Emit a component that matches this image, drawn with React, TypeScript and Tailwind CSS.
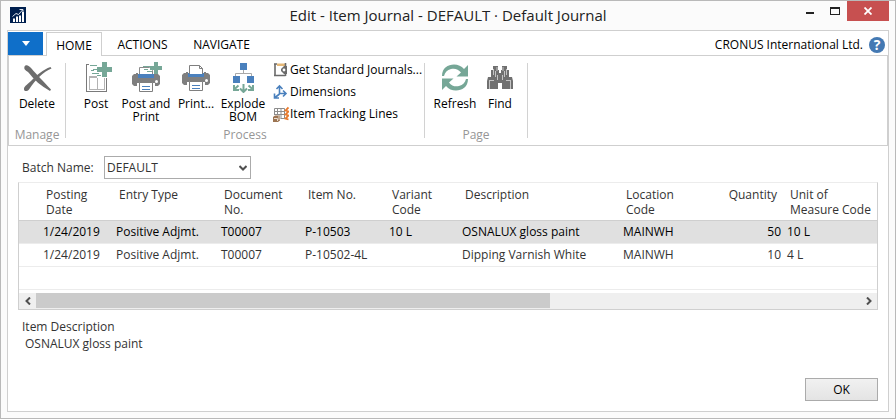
import type { ReactNode } from "react";

function LogoIcon() {
  return (
    <svg width="16" height="16" viewBox="0 0 16 16" aria-hidden="true">
      <rect width="16" height="16" fill="#00204f" />
      <path d="M3 11.500h2V15H3zM6 9.500h2V15H6zM9 8.500h2V15H9zM12 5h2v10h-2z" fill="#fff" />
      <path d="M2.500 9.500 6 6.500l2.500 1 4-4.500M9.500 2.500h3.500v3" fill="none" stroke="#dfe5ee" strokeWidth="1" />
    </svg>
  );
}

function DeleteIcon() {
  return (
    <svg width="32" height="32" viewBox="0 0 32 32" fill="#6d6d6d" aria-hidden="true">
      <path d="M3.500 5.500C5 3 8 4.500 10.500 7.500 16 14 22 20 30 28.500L29 30C20 25 13 19 7.500 11.500 5.500 9.500 2.500 9 3.500 5.500Z" />
      <path d="M30.500 7.500C22 11 15 18 8 28.500 6 31 2.500 30.500 3 27.500 3.500 25 7 23 10 20 16 14 22 8.500 29.500 6Z" />
    </svg>
  );
}

function PostIcon() {
  return (
    <svg width="32" height="32" viewBox="0 0 32 32" shapeRendering="crispEdges" aria-hidden="true">
      <path d="M6 3h3v1H7v26h19V17h1v14H6z" fill="#7a7a7a" />
      <path d="M9 15h8v2h-7v11h7V17h1v11h6V17h1v12H9z" fill="#b3b3b3" />
      <path d="M10 4h7v1h-7zM13 8h4v1h-4zM11 9h3v1h-3zM12 12h7v1h-7zM17 14h4v1h-4z" fill="#76a797" />
      <path d="M22 1h5v5h5v5h-5v5h-5v-5h-5V6h5z" fill="#76a797" />
    </svg>
  );
}

function PrinterBody() {
  return (
    <>
      <path d="M4 13h2v-1h2v4h16v-4h2v1h2l2 2v8l-2 2h-3v-3H7v3H4l-2-2v-8z" fill="#7f7f7f" />
      <path d="M8 13h16v4H8z" fill="#4a80bd" />
      <path d="M9.500 21.500h13v9h-13z" fill="#fff" stroke="#7f7f7f" />
      <path d="M12 25.500h8M12 28.500h8" stroke="#4a80bd" />
      <circle cx="26.500" cy="20.500" r="1.500" fill="#fff" />
    </>
  );
}

function PostPrintIcon() {
  return (
    <svg width="32" height="32" viewBox="0 0 32 32" aria-hidden="true">
      <PrinterBody />
      <path d="M9.500 14V6.500h10l3 3V14" fill="#fff" stroke="#8b8b8b" />
      <path d="M9 13h14v1H9z" fill="#4a80bd" />
      <path d="M13 5.500h7M14 8.500h4M17 10.500h5" stroke="#76a797" />
      <path d="M24 1h4v4h4v4h-4v4h-4V9h-4V5h4z" fill="#76a797" />
    </svg>
  );
}

function PrintIcon() {
  return (
    <svg width="32" height="32" viewBox="0 0 32 32" aria-hidden="true">
      <g transform="translate(0 -1)">
        <PrinterBody />
      </g>
      <path d="M9.500 14V4.500h10l3 3V14z" fill="#fff" stroke="#7f7f7f" />
      <path d="M19.500 4.500v3h3" fill="none" stroke="#7f7f7f" />
      <path d="M8 13h16v3H8z" fill="#4a80bd" />
    </svg>
  );
}

function ExplodeIcon() {
  return (
    <svg width="32" height="32" viewBox="0 0 32 32" aria-hidden="true">
      <path d="M16.500 9v3M8.500 15v-2.500h16V15" fill="none" stroke="#a9a9a9" />
      <path d="M13 2h7v7h-7zM6 15h7v7H6zM20 15h7v7h-7z" fill="#4a80bd" />
      <g fill="none" stroke="#76a797" strokeWidth="2">
        <path d="M16.500 23v8M13 27.500l3.500 3.500 3.500-3.500" />
        <path d="M11.500 24.500l-5 4.500M7 24v5h5M21.500 24.500l5 4.500M26 24v5h-5" />
      </g>
    </svg>
  );
}

function RefreshIcon() {
  return (
    <svg width="32" height="32" viewBox="0 0 32 32" aria-hidden="true">
      <g fill="#76a797">
        <path d="M3 15C3 7 9 3.500 15 3.500c4 0 7.500 1.500 10 4.500l4-4v11.500H17.500l4.500-4C19.500 8 15.500 7 12 8c-4 1-6 3.500-7 7Z" />
        <path d="M29 18c0 8-6 11.500-12 11.500-4 0-7.500-1.500-10-4.500l-4 4V17.500h11.500l-4.500 4c2.500 3.500 6.500 4.500 10 3.500 4-1 6-3.500 7-7Z" />
      </g>
    </svg>
  );
}

function FindIcon() {
  return (
    <svg width="32" height="32" viewBox="0 0 32 32" aria-hidden="true">
      <path d="M9 5h5v4h1v3h2V9h1V5h5v4h2v7h3l1 4v8H18v-6h-4v6H3v-8l1-4h3V9h2z" fill="#707070" />
      <path d="M9.500 8v6M13 6v4M19 6v4M22.500 8v6M11.500 10v6M20.500 10v6M5 19.500h5M22 19.500h5M5.500 20v8M26.500 20v8M13.500 14v5M18.500 14v5" fill="none" stroke="#c4c4c4" strokeWidth="1" />
    </svg>
  );
}

function JournalIcon() {
  return (
    <svg className="shrink-0" width="16" height="16" viewBox="0 0 16 16" aria-hidden="true">
      <path d="M4 1.500h8V4H4z" fill="#e5b878" />
      <path d="M2 2v12M1 2h3M1 13.500h11.500M12.500 11v3M12.500 1v3" fill="none" stroke="#6a6a6a" strokeWidth="1.600" />
      <path d="M8 7l3-3h3v8h-3L8 9z" fill="#6a6a6a" />
      <circle cx="11" cy="8" r="1.400" fill="#fff" />
    </svg>
  );
}

function DimensionsIcon() {
  return (
    <svg className="shrink-0" width="16" height="16" viewBox="0 0 16 16" fill="none" stroke="#4a80bd" strokeWidth="1.600" aria-hidden="true">
      <path d="M6.500 10V2M3.500 5l3-3 3 3M6.500 9.500H13M10 6.500l3 3-3 3M6.500 10 2 13.500M1.500 9.500V14H6" />
    </svg>
  );
}

function TrackingIcon() {
  return (
    <svg className="shrink-0" width="16" height="16" viewBox="0 0 16 16" aria-hidden="true">
      <path d="M1.500 2.500h10v10h-4M1.500 8V2.500M1 5.500h10M1 8.500h10M4.500 2.500V9M8 2.500v10" fill="none" stroke="#8d8d8d" />
      <path d="M0 11l2-1.500h5v5L5 16H0z" fill="#9c7452" />
      <path d="M1 12.500h3.500V15M6 10v4" fill="none" stroke="#e8dccf" />
      <path d="M15.500 1.500l-3 3 3 1-3 3 3 1-3 3 3 1" fill="none" stroke="#e8792b" strokeWidth="1.800" />
    </svg>
  );
}

function RibbonButton({ icon, lines, width }: { icon: ReactNode; lines: string[]; width: string }) {
  return (
    <button type="button" className={`flex flex-col items-center text-black ${width}`}>
      {icon}
      <span className="mt-1 text-[12px] leading-[13px] whitespace-nowrap">
        {lines.map((line) => (
          <span key={line} className="block">
            {line}
          </span>
        ))}
      </span>
    </button>
  );
}

function SmallButton({ icon, label }: { icon: ReactNode; label: string }) {
  return (
    <button type="button" className="flex h-[22px] items-center gap-px whitespace-nowrap text-black">
      {icon}
      <span>{label}</span>
    </button>
  );
}

function RibbonGroup({ title, children }: { title: string; children: ReactNode }) {
  return (
    <section aria-label={title} className="my-[7px] flex h-[75px] flex-col border-r border-[#d2d2d2]">
      <div className="-mt-0.5 flex h-[67px] shrink-0 items-start">{children}</div>
      <h2 className="shrink-0 text-center leading-[14px] text-[#969696]">{title}</h2>
    </section>
  );
}

const columns = [
  { title: ["Posting", "Date"], width: "w-[73px]" },
  { title: ["Entry Type"], width: "w-[105px]" },
  { title: ["Document", "No."], width: "w-[84px]" },
  { title: ["Item No."], width: "w-[84px]" },
  { title: ["Variant", "Code"], width: "w-[73px]" },
  { title: ["Description"], width: "w-[161px]" },
  { title: ["Location", "Code"], width: "w-[74px]" },
  { title: ["Quantity"], width: "w-[90px]", numeric: true },
  { title: ["Unit of", "Measure Code"], width: "w-auto" },
];

const rows = [
  ["1/24/2019", "Positive Adjmt.", "T00007", "P-10503", "10 L", "OSNALUX gloss paint", "MAINWH", "50", "10 L"],
  ["1/24/2019", "Positive Adjmt.", "T00007", "P-10502-4L", "", "Dipping Varnish White", "MAINWH", "10", "4 L"],
];

function JournalTable() {
  return (
    <div className="mx-2.5 mt-[3px] border border-t-[#ececec] border-[#cfcfcf]">
      <table className="w-full table-fixed border-collapse text-left">
        <colgroup>
          <col className="w-[21px]" />
          {columns.map((c) => (
            <col key={c.title[0]} className={c.width} />
          ))}
        </colgroup>
        <thead>
          <tr className="h-[37px] border-b border-[#cfcfcf] align-top">
            <td />
            {columns.map((c) => (
              <th
                key={c.title[0]}
                scope="col"
                className={`pt-1 leading-[15px] font-normal whitespace-nowrap text-[#333] ${c.numeric ? "pr-[7px] text-right" : "pl-1.5"}`}
              >
                {c.title.map((line) => (
                  <span key={line} className="block">
                    {line}
                  </span>
                ))}
              </th>
            ))}
          </tr>
        </thead>
        <tbody>
          {rows.map((row, r) => (
            <tr key={row[3]} className={`h-[23px] border-b border-[#ececec] ${r === 0 ? "bg-[#e0e0e0] text-black" : "text-[#333]"}`}>
              <td />
              {row.map((value, i) => (
                <td key={columns[i].title[0]} className={`whitespace-nowrap ${columns[i].numeric ? "pr-[3px] text-right" : "pl-[3px]"}`}>
                  {value}
                </td>
              ))}
            </tr>
          ))}
          <tr className="h-[23px] border-b border-[#ececec]">
            <td colSpan={10} />
          </tr>
        </tbody>
      </table>
      <div className="mt-[3px] flex h-4 bg-[#efefef]">
        <button type="button" aria-label="Scroll left" className="flex w-[17px] items-center justify-center">
          <svg width="8" height="8" viewBox="0 0 8 8" aria-hidden="true">
            <path d="M6 .5 2.500 4 6 7.500" fill="none" stroke="#505050" strokeWidth="2" />
          </svg>
        </button>
        <div className="flex-1">
          <div className="h-[15px] w-[62.4%] bg-[#cbcbcb]" />
        </div>
        <button type="button" aria-label="Scroll right" className="flex w-[17px] items-center justify-center">
          <svg width="8" height="8" viewBox="0 0 8 8" aria-hidden="true">
            <path d="M2 .5 5.500 4 2 7.500" fill="none" stroke="#505050" strokeWidth="2" />
          </svg>
        </button>
      </div>
    </div>
  );
}

export default function App() {
  return (
    <div className="flex min-h-screen flex-col border border-[#b9b9b9] bg-[#fbfbfb] px-1.5 pb-1.5 font-['Open_Sans','Noto_Sans',sans-serif] text-[12px] text-[#333]">
      <header className="flex h-[29px] shrink-0 items-start">
        <div className="w-[92px] pt-1.5 pl-[3px]">
          <LogoIcon />
        </div>
        <h1 className="flex-1 pt-[3px] text-center text-[15px] leading-[22px] whitespace-nowrap text-[#222]">
          Edit - Item Journal - DEFAULT · Default Journal
        </h1>
        <div className="flex h-5 w-[92px] justify-end">
          <button type="button" aria-label="Minimize" className="flex w-[27px] items-center justify-center pt-1">
            <span className="h-0.5 w-2 bg-[#222]" />
          </button>
          <button type="button" aria-label="Maximize" className="flex w-[27px] items-center justify-center">
            <span className="h-2 w-2.5 border border-t-2 border-[#222]" />
          </button>
          <button type="button" aria-label="Close" className="flex w-[45px] items-center justify-center bg-[#c75050]">
            <svg width="8" height="8" viewBox="0 0 8 8" aria-hidden="true">
              <path d="M.5.5l7 7M7.500.5l-7 7" stroke="#fff" strokeWidth="1.800" />
            </svg>
          </button>
        </div>
      </header>

      <main className="flex flex-1 flex-col border border-[#cfcfcf] bg-white">
        <nav className="flex h-[25px] shrink-0 border-b border-[#cfcfcf] text-black">
          <button type="button" aria-label="Application menu" className="mt-px flex h-[23px] w-[35px] items-center justify-center bg-[#0f6fc9]">
            <svg width="8" height="5" viewBox="0 0 8 5" aria-hidden="true">
              <path d="M0 0h8L4 5z" fill="#fff" />
            </svg>
          </button>
          <button type="button" className="mt-px ml-[3px] -mb-px w-14 border border-b-0 border-[#cfcfcf] bg-white pt-0.5 text-center">
            HOME
          </button>
          <button type="button" className="w-[81px] pt-1 text-center">
            ACTIONS
          </button>
          <button type="button" className="w-[77px] pt-1 text-center">
            NAVIGATE
          </button>
          <div className="ml-auto flex items-center gap-1.5 pt-1 pr-[3px]">
            <span>CRONUS International Ltd.</span>
            <button
              type="button"
              aria-label="Help"
              className="flex size-4 items-center justify-center rounded-full bg-[#4479b3] text-[14px] leading-4 font-bold text-white"
            >
              ?
            </button>
          </div>
        </nav>

        <div className="flex h-[90px] shrink-0 border-x border-b border-[#cfcfcf]">
          <RibbonGroup title="Manage">
            <RibbonButton icon={<DeleteIcon />} lines={["Delete"]} width="w-14" />
          </RibbonGroup>
          <RibbonGroup title="Process">
            <div className="flex pl-1.5">
              <RibbonButton icon={<PostIcon />} lines={["Post"]} width="w-12" />
              <RibbonButton icon={<PostPrintIcon />} lines={["Post and", "Print"]} width="w-[52px]" />
              <RibbonButton icon={<PrintIcon />} lines={["Print..."]} width="w-12" />
              <RibbonButton icon={<ExplodeIcon />} lines={["Explode", "BOM"]} width="w-[46px]" />
            </div>
            <div className="-mt-0.5 flex w-[158px] flex-col pl-[7px]">
              <SmallButton icon={<JournalIcon />} label="Get Standard Journals..." />
              <SmallButton icon={<DimensionsIcon />} label="Dimensions" />
              <SmallButton icon={<TrackingIcon />} label="Item Tracking Lines" />
            </div>
          </RibbonGroup>
          <RibbonGroup title="Page">
            <div className="flex px-1.5">
              <RibbonButton icon={<RefreshIcon />} lines={["Refresh"]} width="w-12" />
              <RibbonButton icon={<FindIcon />} lines={["Find"]} width="w-[42px]" />
            </div>
          </RibbonGroup>
        </div>

        <div className="mt-2.5 flex items-center pl-3.5">
          <label htmlFor="batch" className="w-[82px]">
            Batch Name:
          </label>
          <div className="relative">
            <select id="batch" className="h-[23px] w-[147px] appearance-none border border-[#ababab] bg-white pl-0.5">
              <option>DEFAULT</option>
            </select>
            <svg className="pointer-events-none absolute top-2 right-1" width="8" height="8" viewBox="0 0 8 8" aria-hidden="true">
              <path d="M.5 2 4 5.500 7.500 2" fill="none" stroke="#505050" strokeWidth="2" />
            </svg>
          </div>
        </div>

        <JournalTable />

        <div className="mt-2 pl-3.5 leading-[17px]">
          <h2>Item Description</h2>
          <p className="pl-[3px]">OSNALUX gloss paint</p>
        </div>

        <footer className="mt-auto flex justify-end pr-2.5 pb-2.5">
          <button type="button" className="h-[23px] w-[73px] border border-[#ababab] bg-linear-to-b from-[#f1f1f1] to-[#e4e4e4] text-black">
            OK
          </button>
        </footer>
      </main>
    </div>
  );
}
